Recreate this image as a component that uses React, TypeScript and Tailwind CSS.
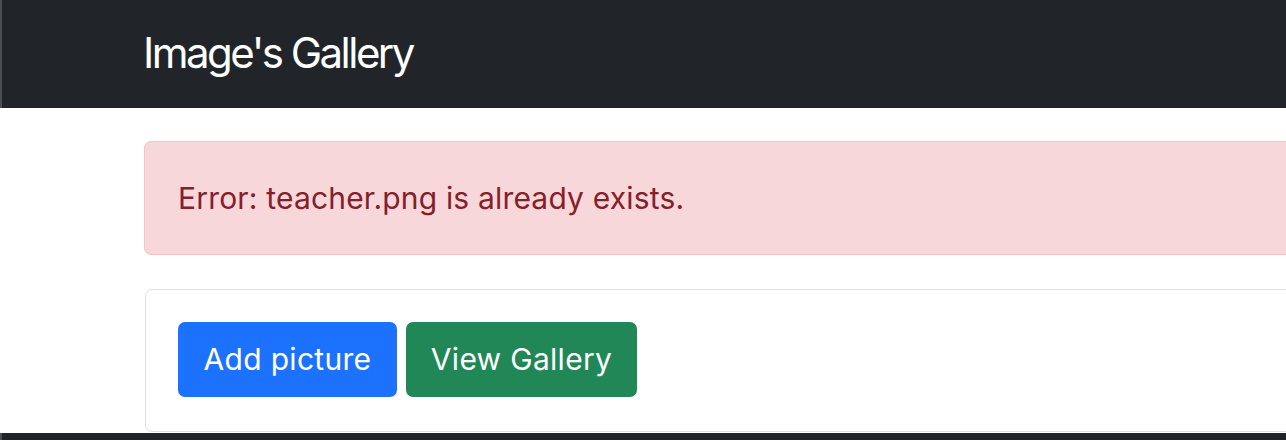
import React from 'react';

const font = { fontFamily: 'Inter, "Liberation Sans", sans-serif' };

export default function App() {
   return (
      <div className="w-[1286px] h-[440px] overflow-hidden bg-white flex flex-col" style={font}>
         <header className="h-[108px] shrink-0 bg-[#212529] border-l-2 border-[#4b4e52] flex items-center pb-[3px]">
            <div className="ml-[141px] text-[42px] leading-none text-white tracking-[-0.06em]">Image's Gallery</div>
         </header>

         <main className="ml-[144px] w-[1200px] shrink-0">
            <div className="mt-[33px] h-[114px] rounded-[7px] border border-[#f5c2c7] bg-[#f8d7da] pl-[33px] flex items-center">
               <p className="text-[30px] leading-[42px] text-[#842029] tracking-[0.006em]">Error: teacher.png is already exists.</p>
            </div>

            <div className="mt-[34px] h-[143px] ml-px rounded-[7px] border border-[#dfdfdf] flex items-start gap-[9px] pl-[32px] pt-[32px]">
               <button className="h-[75px] w-[219px] rounded-[7px] bg-[#1d72fd] text-white text-[30px] tracking-[0.01em]">Add picture</button>
               <button className="h-[75px] w-[231px] rounded-[7px] bg-[#218756] text-white text-[30px] tracking-[0.01em]">View Gallery</button>
            </div>
         </main>

         <div className="mt-px flex-1 bg-[#212529] border-l-2 border-[#4b4e52]" />
      </div>
   );
}
